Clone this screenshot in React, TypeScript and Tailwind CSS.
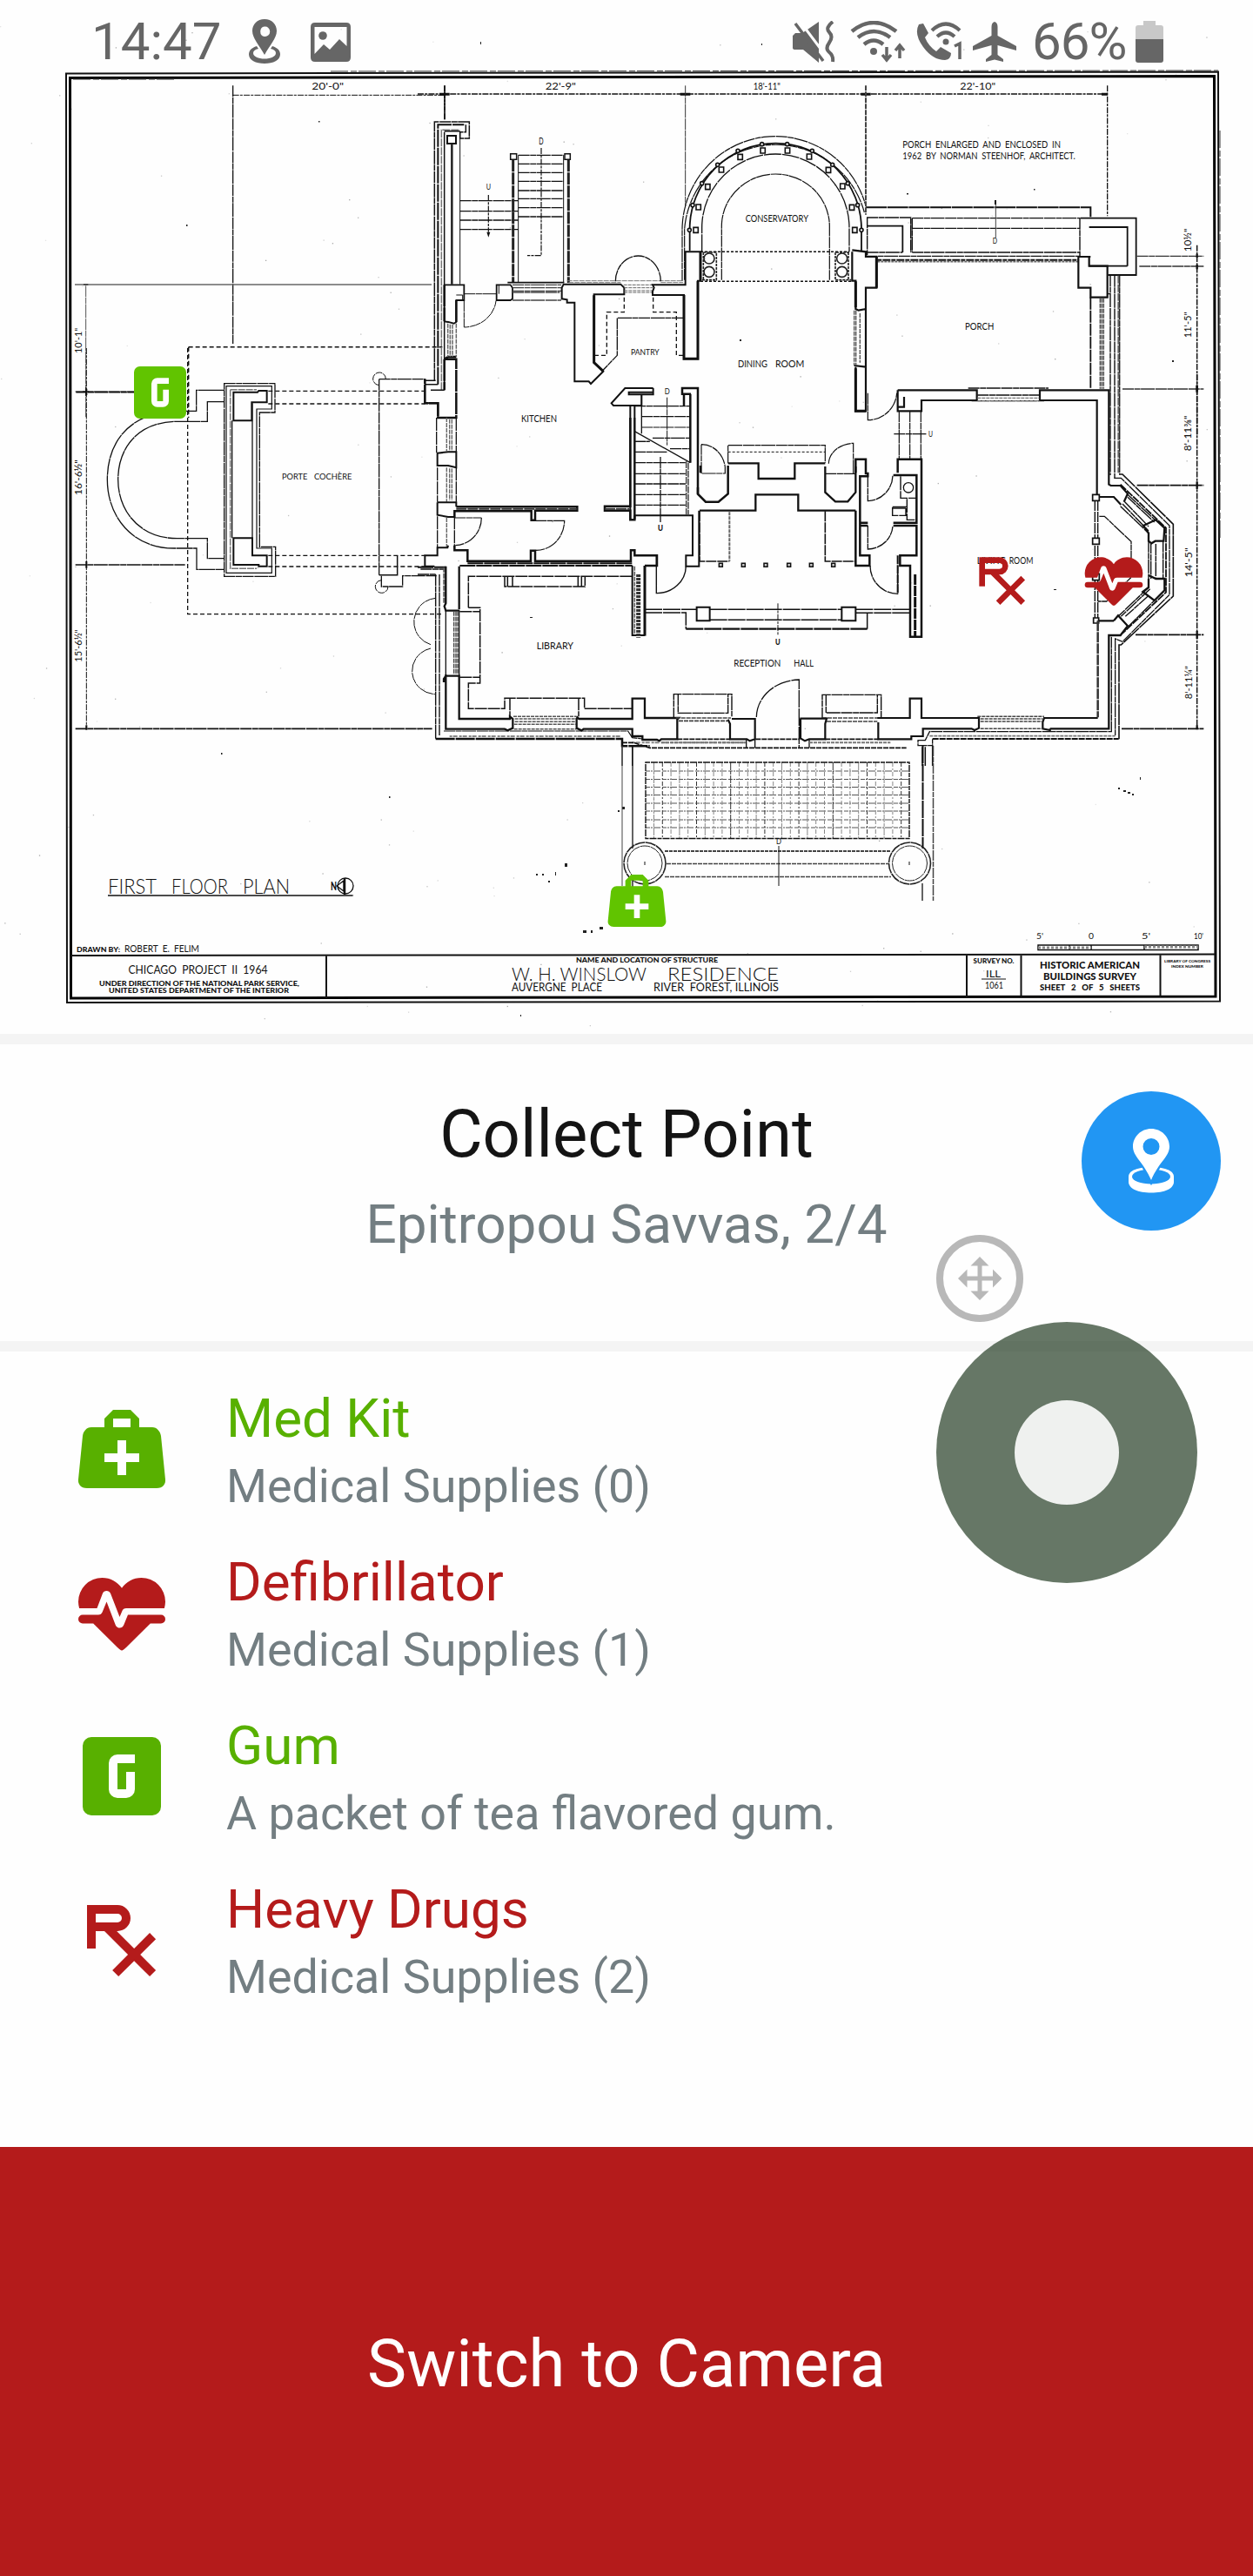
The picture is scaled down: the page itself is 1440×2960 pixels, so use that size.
import React from "react";

const ICONS = {
  bag: "M10,3L8,5V7H5C3.85,7 3.12,8 3,9L2,19C1.88,20 2.54,21 4,21H20C21.46,21 22.12,20 22,19L21,9C20.88,8 20.06,7 19,7H16V5L14,3H10M10,5H14V7H10V5M11,10H13V13H16V15H13V18H11V15H8V13H11V10Z",
  heart:
    "M7.5,4A5.5,5.5 0 0,0 2,9.5C2,10 2.09,10.5 2.22,11H6.3L7.57,7.63C7.87,6.83 9.05,6.75 9.43,7.63L11.5,13L12.09,11.58C12.22,11.25 12.57,11 13,11H21.78C21.91,10.5 22,10 22,9.5A5.5,5.5 0 0,0 16.5,4C14.64,4 13,4.93 12,6.34C11,4.93 9.36,4 7.5,4V4M3,12.5A1,1 0 0,0 2,13.5A1,1 0 0,0 3,14.5H5.44L11,20C12,20.9 12,20.9 13,20L18.56,14.5H21A1,1 0 0,0 22,13.5A1,1 0 0,0 21,12.5H13.4L12.47,14.8C12.07,15.81 10.92,15.67 10.55,14.83L8.5,9.5L7.54,11.83C7.39,12.21 7.05,12.5 6.6,12.5H3Z",
  gum: "M5,3H19A2,2 0 0,1 21,5V19A2,2 0 0,1 19,21H5A2,2 0 0,1 3,19V5A2,2 0 0,1 5,3M11,7A2,2 0 0,0 9,9V15A2,2 0 0,0 11,17H13A2,2 0 0,0 15,15V11H13V15H11V9H15V7H11Z",
  rx: "M4,4V10L4,14H6V10H8L13.41,15.41L9.83,19L11.24,20.41L14.83,16.83L18.41,20.41L19.82,19L16.24,15.41L19.82,11.83L18.41,10.41L14.83,14L10.83,10H11A3,3 0 0,0 14,7A3,3 0 0,0 11,4H4M6,6H11A1,1 0 0,1 12,7A1,1 0 0,1 11,8H6V6Z",
};
type IconName = keyof typeof ICONS;

function Icon({ name, className }: { name: IconName; className: string }) {
  return (
    <svg viewBox="0 0 24 24" fill="currentColor" className={className}>
      <path fillRule="evenodd" d={ICONS[name]} />
    </svg>
  );
}

/* ---------- floor plan ---------- */

const THIN = "13 0.6 7 0.5 16 0.8";
const DOT = "5 3";
const CHAIN = "7 1.2 3 1.2";

function Tile({ x, y, children }: { x: number; y: number; children: React.ReactNode }) {
  return (
    <g transform={`translate(${x} ${y}) scale(0.33333)`} className="[&_*]:[vector-effect:non-scaling-stroke]">
      {children}
    </g>
  );
}

function Ln({ d, w = 1, dash, c = "#111" }: { d: string; w?: number; dash?: string; c?: string }) {
  return <path d={d} fill="none" stroke={c} strokeWidth={w} strokeDasharray={dash} />;
}

type LblProps = { x: number; y: number; w: number; s: number; t: string; b?: boolean; l?: boolean; r?: boolean };

function Lbl({ x, y, w, s, t, b, l, r }: LblProps) {
  return (
    <text
      x={x}
      y={y}
      fontSize={s}
      textLength={w}
      lengthAdjust="spacingAndGlyphs"
      fontFamily="Lato, sans-serif"
      fontWeight={b ? 900 : l ? 300 : 400}
      fill="#111"
      transform={r ? `rotate(-90 ${x} ${y})` : undefined}
      xmlSpace="preserve"
    >
      {t}
    </text>
  );
}

const COLUMNS = [
  [959, 553, 937, 553], [968, 474, 948, 467], [1000, 404, 980, 392], [1047, 345, 1034, 328],
  [1112, 301, 1104, 280], [1190, 279, 1187, 257], [1275, 279, 1274, 257], [1350, 300, 1360, 280],
  [1416, 346, 1430, 328], [1465, 402, 1483, 392], [1497, 475, 1517, 467], [1507, 553, 1530, 553],
];

const SPECKS = Array.from({ length: 170 }, (_, i) => ({
  x: (i * 397.31 + i * i * 13.7) % 1438,
  y: 30 + ((i * 211.73 + i * i * 7.9) % 1150),
  o: 0.15 + ((i * 7) % 10) / 25,
}));

const DARK_SPECKS = [
  [552, 48, 1, 3], [875, 50, 1, 2], [254, 865, 1.5, 2], [447, 915, 1.5, 2], [649, 992, 3, 4], [616, 1004, 2, 2],
  [623, 1004, 2, 2], [630, 1012, 2, 2], [638, 1002, 1, 4], [670, 1069, 4, 3], [679, 1069, 2, 3], [689, 1065, 4, 3],
  [715, 927, 3, 3], [710, 931, 2, 2], [1285, 905, 2, 2], [1291, 908, 3, 2], [1296, 910, 3, 2], [1301, 912, 2, 2],
  [1310, 893, 1, 3], [366, 139, 1.5, 1.5], [214, 258, 1.5, 2], [850, 390, 2, 2], [1188, 217, 1.5, 1.5], [1042, 222, 2, 1.5],
  [1211, 677, 3, 1], [598, 1166, 1, 2], [609, 709, 3, 1], [1347, 414, 2, 2],
];

function FloorPlan() {
  return (
    <svg viewBox="0 0 1440 1188" className="block h-[1188px] w-[1440px]">
      <g fill="#555">
        {SPECKS.map((s, i) => (
          <rect key={i} x={s.x} y={s.y} width="1.3" height="1.3" opacity={s.o} />
        ))}
      </g>
      <g fill="#222">
        {DARK_SPECKS.map(([x, y, w, h], i) => (
          <rect key={i} x={x} y={y} width={w} height={h} />
        ))}
      </g>

      {/* sheet border */}
      <Ln w={2} d="M76,84.5L1400,82.5L1402,1150.5L77,1152Z" />
      <Ln w={3} c="#000" d="M80.5,89.5L1395.5,87.5L1397,1145L81.5,1147Z" />
      <Ln w={1} dash="20 3 7 2" c="#333" d="M380,82L1400,81M84,91L200,91M1402,150V620" />

      {/* upper left: dimension lines */}
      <Tile x={60} y={80}>
        <Ln dash={THIN} w={1.3} d="M623,55V945" />
        <Ln dash={CHAIN} d="M623,88H1353" />
        <Ln dash="7 1" d="M1353,55V175" w={1.5} />
        <Ln c="#666" w={1.3} d="M78,741H1308" />
        <Ln dash={THIN} c="#555" d="M116,745V1200" />
        <Ln dash={DOT} w={1.5} d="M470,956H1345M470,956V1200" />
        <Ln dash={THIN} d="M80,1110H282M105,1110H127M116,1095V1125M108,741H124" />
        <Lbl x={895} y={70} w={110} s={32} t={"20'-0\""} />
        <Lbl r x={102} y={978} w={88} s={32} t={"10'-1\""} />
      </Tile>

      {/* porte cochere */}
      <Tile x={60} y={400}>
        <Ln w={1.3} dash="30 0.5 19 0.5" d="M593,145H497V217H440C270,217 190,320 190,453C190,580 275,690 420,690H498V763H593M593,185H535V253H430C300,253 227,340 227,453C227,560 300,656 430,656H535V725H593" />
        <Ln dash={THIN} w={1.3} d="M593,122H768V222H715V685H770V787H593Z" />
        <Ln w={1.2} d="M600,131H757V210H705V690H757V775H600Z" />
        <Ln c="#777" dash="8 1" w={1.5} d="M614,143V760H705M614,143H705" />
        <Ln w={2} d="M625,152H708L712,147H740V187H688V250H625ZM625,655H690V715H740V752H712V747H625Z" />
        <Ln w={1.3} d="M620,250V655M690,190V655" />
        <Ln dash={DOT} w={1.3} d="M745,148H1285M745,192H1285M745,715H1285M745,753H1285M467,0V917H1350" />
        <Ln dash={THIN} w={1.3} d="M1127,107V782M1127,107H1285M1135,785V822H1208V785H1325" />
        <Ln w={1.5} d="M1127,782H1190V715M1285,107V190H1330" />
        <Ln w={2} d="M1285,190H1330V240H1393" />
        <Ln dash="8 1" d="M1127,128A22,22 0 1 1 1150,107M1135,800A22,22 0 1 0 1158,822" />
        <Lbl x={792} y={453} w={88} s={30} t="PORTE" />
        <Lbl x={903} y={453} w={130} s={30} t="COCHÈRE" />
        <Ln dash={THIN} d="M1322,862A82,82 0 0 0 1305,1022M1305,1035A82,80 0 0 0 1320,1193" />
        <Ln dash={THIN} w={1.6} d="M82,152H282M80,747H458M80,1312H1310" />
        <Ln dash={CHAIN} d="M118,0V1310" />
        <Ln w={2} d="M118,140V162M118,735V758M118,1300V1316" />
        <Lbl r x={102} y={507} w={122} s={32} t={"16'-6½\""} />
        <Lbl r x={102} y={1082} w={112} s={32} t={"15'-6½\""} />
      </Tile>

      {/* kitchen, pantry, conservatory */}
      <Tile x={480} y={80}>
        <Ln dash={THIN} w={1.5} d="M58,1072V180H178V237H146V215H166V190" />
        <Ln w={2} dash="20 1" d="M70,1085V190H160" />
        <Ln c="#777" w={1.5} dash="9 1" d="M82,1105V208H146" />
        <Ln w={1.5} d="M25,1072H62M25,1085H70M92,1105H45M92,215V1105M92,212H146" />
        <Ln w={2} d="M102,228H132V255H102Z" />
        <Ln w={2.5} c="#222" d="M118,255V740" />
        <Ln d="M146,215V740M347,295V735M503,295V735" />
        <Ln w={1.4} dash={THIN} d="M146,452H347M146,488H347M146,519H347M146,551H347M347,295H503M347,325H503M347,355H503M347,385H503M347,417H503M347,445H503M347,476H503M347,507H503" />
        <Ln dash={CHAIN} w={1.2} d="M244,432V560M426,270V641H378" />
        <path d="M238,560H250L244,578Z" fill="#111" />
        <Ln w={3} c="#222" dash="14 1" d="M329,310V735M520,310V735" />
        <Ln w={1.5} d="M320,290H341V310H320ZM507,290H526V310H507Z" />
        <Lbl x={418} y={259} w={16} s={32} t="D" />
        <Lbl x={236} y={415} w={16} s={28} t="U" />
        <Ln w={1.8} d="M92,742H160V795H133V870L125,875L105,870L92,868M272,742H320L327,752V790L320,795H272ZM310,734H505" />
        <Ln w={2.5} dash="25 1" d="M92,742V868M133,795V870M92,998H133V1200H70V1150H25V1066M92,998V1105M92,998L105,990H133" />
        <Ln c="#666" dash="5 1" w={1.5} d="M104,875V990M112,878V990M120,878V990M133,875V990" />
        <Ln dash={THIN} d="M160,773H270M160,795V888A112,100 0 0 0 270,797M133,777H155V795M280,742V773" />
        <Ln dash={THIN} c="#444" w={1.3} d="M327,742H495M327,752H495M327,763H495M327,768H490M327,795H495" />
        <Ln w={2} d="M503,740H700L712,752V775H608V1010L640,1040L597,1083L590,1075H541V803H515V793L497,790V752Z" />
        <Ln w={3} d="M608,778V1010L640,1040" />
        <Ln c="#777" dash="6 1" d="M515,728H915M520,734H700M838,734H915" />
        <Ln dash={THIN} d="M682,730A78,88 0 0 1 838,730" w={1.3} />
        <Ln c="#666" dash="4 1" d="M710,742H812M712,752H810M712,762H810M712,768H810" />
        <Ln w={2} d="M810,742H923V628H975V728H966V997H918V777H810V765L815,752Z" />
        <Ln w={3} d="M966,728V997H918V777M975,628V728" />
        <Ln dash={DOT} w={1.3} d="M712,785V836H652V985H610M812,785V836H892V985H918" />
        <Ln dash={THIN} w={1.3} d="M915,856H688V985L640,1035" />
        <Lbl x={735} y={985} w={98} s={31} t="PANTRY" />
        <Ln dash={CHAIN} w={1.4} d="M0,84H2380" />
        <path d="M75,80H110V89H75ZM905,80H940V89H905ZM1528,80H1562V89H1528ZM2358,80H2378V89H2358Z" fill="#111" />
        <Ln w={1.5} dash="9 1" d="M93,55V175" />
        <Ln dash={THIN} c="#333" d="M923,55V470" />
        <Lbl x={440} y={68} w={106} s={32} t={"22'-9\""} />
        <Lbl x={1157} y={68} w={93} s={32} t={"18'-11\""} />

        <Ln dash={THIN} w={1.2} d="M1048,725V540A186,180 0 0 1 1420,540V725" />
        <Ln w={1.3} dash="20 1" d="M980,628V545A254,254 0 0 1 1488,545V628" />
        <Ln w={1.8} d="M938,625V550A296,296 0 0 1 1530,550V625" />
        <Ln dash={THIN} w={1.2} d="M920,725V550A316,316 0 0 1 1540,492" />
        <Ln dash={THIN} w={1.2} d="M912,728V550A322,324 0 0 1 1545,470" />
        {COLUMNS.map(([sx, sy, cx, cy], i) => (
          <g key={i} fill="#fff" stroke="#111" strokeWidth="1.6">
            <rect x={sx - 8} y={sy - 9} width="16" height="18" />
            <circle cx={cx} cy={cy} r="6" />
          </g>
        ))}
        <g fill="none" stroke="#222" strokeWidth="1.6">
          <path d="M985,630H1030V725H980M1488,630H1440V725H1495M985,630V725M1485,630V725" strokeDasharray="3 1" />
          <circle cx="1005" cy="651" r="18" />
          <circle cx="1005" cy="697" r="18" />
          <circle cx="1463" cy="651" r="18" />
          <circle cx="1463" cy="697" r="18" />
        </g>
        <Ln dash="3 2" w={1.5} d="M975,628H1488M975,730H1500" />
        <Lbl x={1130} y={525} w={217} s={33} t="CONSERVATORY" />
        <Lbl x={1104} y={1025} w={102} s={34} t="DINING" />
        <Lbl x={1233} y={1025} w={100} s={34} t="ROOM" />
        <Lbl x={357} y={1215} w={123} s={35} t="KITCHEN" />

        <Ln w={2} d="M812,1098H715L668,1150L675,1158H733V1550M812,1098V1120H728V1112H812M748,1158V1550M772,1120V1158H733" />
        <Ln w={1.3} d="M772,1120V1255M748,1247L940,1355" />
        <Ln dash={THIN} w={1.2} d="M748,1160H938M772,1196H938M772,1233H938M810,1270H938M748,1282H800M870,1307H938" />
        <Ln dash={THIN} d="M860,1130V1295" />
        <Lbl x={851} y={1120} w={18} s={28} t="D" />
        <Ln w={2.5} d="M918,1160V1118H912V1098H966V1463M940,1118V1355M918,1118H942" />
      </Tile>

      {/* hall, library, stairs */}
      <Tile x={480} y={480}>
        <Ln w={1.3} dash="15 1" d="M65,0V120M68,172V290M68,340V448M133,0V120M133,172V290M127,340V448" />
        <Ln c="#666" dash="5 1" w={1.4} d="M100,0V115M110,5V115M118,5V115M100,172V290M110,175V285M118,175V285M100,345V445" />
        <Ln w={2} d="M68,122L105,118H133V172L105,165H68ZM68,292H133V307M68,292V335L105,342H127M105,440L103,448H68V475H25V512H58" />
        <Ln w={2.5} d="M133,307H550V320H405V353H392V322H127V345M127,440V457H172V494H390V458H405V494H735V457H748V475H825V510H783M733,0V305H645V320H733V352H748V337" />
        <Ln w={2} c="#333" dash="12 1" d="M133,314H550M645,314H730" />
        <Ln w={2} d="M748,0V350" />
        <Ln w={1.2} dash={THIN} d="M127,345H220M220,345A93,95 0 0 1 130,440M405,355H506A98,102 0 0 1 408,457" />
        <Ln w={2} dash="18 1" d="M0,515H97M145,510H740M172,502H740" />
        <Ln w={1.3} dash={THIN} d="M748,118H860M748,155H925M748,193H925M748,228H925M748,265H925M748,301H925M748,82H800M837,135V360" />
        <Ln w={2} d="M748,337H948V475H925V512H970V320" />
        <Ln w={1.5} c="#444" dash="8 1" d="M926,150V337M933,155V337" />
        <Lbl b x={828} y={389} w={18} s={27} t="U" />
        <Ln w={2.5} d="M966,240V263L993,290H1037L1070,262V165M975,165V190" />
        <Ln w={1.2} dash={THIN} d="M978,92A82,90 0 0 1 1060,170V192H978V92" />
        <Ln w={1.2} dash={THIN} d="M1070,157V95H1405V155" />
        <Ln dash="3 2" d="M1070,118H1405" />
        <Ln w={2.3} d="M1070,157H1175V210H1300V157H1405M972,320H1165V265H1312V320H1510" />
        <Ln w={1.6} dash="12 1" d="M972,322V495H1075M1405,322V495H1508" />
        <Ln w={2} c="#666" dash="4 1" d="M1075,325V495" />
        {[1045, 1123, 1200, 1280, 1357, 1433].map((x) => (
          <rect key={x} x={x - 6} y="502" width="12" height="12" fill="#ccc" stroke="#111" strokeWidth="1.5" />
        ))}
        <Ln w={1.4} d="M823,475V605A100,95 0 0 0 925,512" />
        <Ln w={1.5} dash="20 1" d="M783,661H963M783,672H925V728M1007,661H1463M1007,697H1463M1510,661H1698M1510,673H1698M1550,673V728" />
        <Ln w={2.2} dash="20 1" d="M925,728H1550" />
        <Ln w={2} d="M962,653H1007V700H962ZM1462,653H1510V700H1462Z" />
        <Ln dash={CHAIN} d="M1242,640V750" />
        <Lbl b x={1233} y={782} w={17} s={26} t="U" />
        <Lbl x={1090} y={857} w={162} s={35} t="RECEPTION" />
        <Lbl x={1297} y={857} w={68} s={35} t="HALL" />
        <Lbl x={410} y={797} w={127} s={36} t="LIBRARY" />
        <Ln w={2} d="M740,510V750H783" />
        <Ln w={3} d="M783,510V752" />
        <Ln w={5} c="#333" dash="3 1" d="M761,540V758" />
        <Ln w={1.5} c="#555" dash="5 1" d="M748,512V748" />
        <Ln w={1.5} dash="14 1" d="M175,655V547H740M300,547V582H577V547M327,547V582M310,547V582M553,547V582M565,547V582M175,655H215V915H175V1003H300V967H575V1003H740M145,668H215M145,895H215M318,967V1030M555,967V1030" />
        <Ln w={1.4} dash={THIN} d="M62,540V1107M75,540V1095M0,540H62M10,522H90" />
        <Ln w={1.5} c="#555" dash="6 1" d="M90,515V640M95,515V640" />
        <Ln w={2.3} d="M97,512V640L92,650L97,665H145M143,512V660M97,885V1073H300L310,1078L328,1070V1038L318,1030V1038H143V890H97L90,900V912" />
        <Ln w={1.3} d="M97,665V885M143,665V890" />
        <Ln w={1.4} c="#444" dash="5 1" d="M125,668V885M132,668V885M138,668V885" />
        <Ln w={1.5} c="#555" dash="4 1" d="M330,1030H548M335,1038H548M335,1048H545M332,1057H545M332,1073H548" />
        <Ln w={2.3} d="M548,1035V1070L565,1078L572,1073H740V1098H775V1110H825L833,1114L840,1108H895V1040L900,1035H783V968H740V1038H556L548,1030" />
        <Ln w={2.5} dash="22 1" d="M62,1107H705V1132H800" />
        <Ln w={1.2} dash={THIN} d="M90,1080H725L740,1103L775,1107" />
        <Ln w={2} c="#888" dash="3 1 5 2" d="M110,1098H700M740,1120H1130" />
        <Ln w={1.4} dash={THIN} d="M883,1037V953H1083V1030M898,953V1018H1070V953M1395,1037V955H1598V1035M1408,955V1017H1585V955" />
        <Ln w={1.6} c="#444" dash="5 1" d="M890,1035H1080M900,1045H1070M1395,1035H1590M1410,1047H1585" />
        <Ln w={2.2} d="M1083,1038H1163V1108L1145,1114L1135,1108H1077V1055L1070,1040M1318,1037H1410L1405,1055V1108H1350L1335,1114L1320,1105V1037" />
        <Ln w={1.3} dash="20 1" d="M1168,1032A150,130 0 0 1 1315,903V1140M1163,1108V1138M1133,1110V1138M1350,1110V1138" />
        <Ln w={1.6} dash="6 1" d="M895,1108H1077M1165,1108H1318M1405,1108H1588M705,1120H745L800,1138H1685" />
        <Ln w={2} c="#777" dash="4 1" d="M840,1120H1130M1350,1120H1630" />
        <Ln w={1.2} d="M705,1132V1200M740,1132V1200" />
      </Tile>

      {/* porch */}
      <Tile x={940} y={80}>
        <Ln w={2} dash="24 0.7" d="M165,475H940V508" />
        <Ln w={2} c="#444" dash="6 1" d="M165,55V500" />
        <Ln w={1.4} dash={THIN} d="M168,510H320V630M170,508V640M325,512V630M325,547H903M325,630H903M325,512H905M903,512V645" />
        <Ln w={1.8} d="M170,539H292V630M905,512H1097V708H1000M935,543H1067V677M935,677H1067" />
        <Ln w={1.3} dash={THIN} d="M170,630H292M165,643H903" />
        <Ln w={2} dash="5 1 9 1" d="M205,656H900" />
        <Ln w={1.5} c="#666" dash="3 1" d="M205,662H900" />
        <Ln d="M613,450V580" c="#444" />
        <Ln w={2} d="M612,450V465" />
        <Lbl x={602} y={600} w={16} s={26} t="D" />
        <Ln w={2.2} d="M118,628V728H130V825L140,830L165,825M118,622L165,628V645H202V752H165V1110M130,1025V1177H165V1110M125,1020L165,1025M940,645H898V752H940V785H998V677H935V645" />
        <Ln w={3} d="M130,730V820M130,1030V1177H165M202,645V752" />
        <Ln w={1.4} c="#555" dash="5 1" d="M125,830V1020M131,830V1020M145,840V1010" />
        <Ln w={1.8} dash="14 1" d="M940,785V1100" />
        <Ln w={1.4} c="#444" dash="5 1" d="M973,788V1100M979,788V1100M985,788V1100" />
        <Ln w={1.4} dash={THIN} d="M1008,708V1398M998,773H1008M1023,710V1410M1040,710V1395" />
        <Ln w={2} c="#666" dash="9 1" d="M1036,710V1390" />
        <Ln dash={CHAIN} w={1.3} d="M998,55V505" />
        <Lbl x={490} y={68} w={122} s={34} t={"22'-10\""} />
        <Lbl x={292} y={270} w={545} s={35} t="PORCH  ENLARGED  AND  ENCLOSED  IN" />
        <Lbl x={292} y={308} w={595} s={35} t="1962  BY  NORMAN  STEENHOF,  ARCHITECT." />
        <Lbl x={507} y={897} w={100} s={34} t="PORCH" />
        <Ln dash={THIN} c="#333" d="M1100,643H1330M1108,678H1330M1050,1101H1330" w={1.3} />
        <Ln dash={CHAIN} w={1.5} d="M1307,605V1260" />
        <Ln w={2.2} d="M1307,635V648M1307,672V688M1307,1088V1114" />
        <Lbl r x={1287} y={628} w={80} s={34} t={"10½\""} />
        <Lbl r x={1287} y={925} w={90} s={32} t={"11'-5\""} />
      </Tile>

      {/* living room and bay */}
      <Tile x={940} y={430}>
        <Ln w={2.2} d="M275,55H548V90H357V127H275V55M297,78V113H278M765,90V55H1003V380L1010,384H1043L1068,412L1055,440M765,90H962V423H1020L1045,450" />
        <Ln w={1.4} dash={THIN} d="M518,48H795M550,72H763M530,92H780" />
        <Ln w={1.4} c="#777" dash="4 1" d="M550,82H763M550,92H763" />
        <Ln w={1.2} dash={THIN} d="M172,65V158A100,100 0 0 0 272,65M280,127V292M317,127V292M355,127V292M262,206H375" />
        <Lbl x={381} y={217} w={15} s={28} t="U" />
        <Ln w={1.2} dash={THIN} d="M37,308A88,72 0 0 1 122,238V342M25,343H130" />
        <Ln w={2.3} d="M25,318V407L60,439H103L130,407V318" />
        <Ln w={2.5} d="M130,340V293H165V342H172V352H145V512H172M275,340V293H357V905H318V660H283V625H340V522H260M260,348H340V512H260M145,522H172M145,512V625H178V660H130V470" />
        <Ln w={1.4} dash="16 1" d="M285,352V427H340M307,430V502H340M257,457H303V487H257ZM257,462H303" />
        <circle cx="312" cy="391" r="17" fill="none" stroke="#111" strokeWidth="1.3" />
        <Ln w={1.3} dash={THIN} d="M172,352V437A88,90 0 0 0 258,350M172,522V603A88,85 0 0 0 258,525M180,660A95,97 0 0 0 275,757V660" />
        <Ln w={2} d="M275,625V757" dash="10 1" />
        <Ln w={3} dash="12 1" d="M335,690V905" />
        <Lbl x={548} y={654} w={100} s={35} t="LIVING" />
        <Lbl x={659} y={654} w={83} s={35} t="ROOM" />
        <Ln w={1.4} dash="12 1" d="M955,435V840M965,435V840" />
        <g fill="#fff" stroke="#111" strokeWidth="1.7">
          <rect x="947" y="415" width="23" height="21" />
          <rect x="947" y="565" width="23" height="21" />
          <rect x="947" y="688" width="23" height="22" />
          <rect x="950" y="840" width="18" height="18" />
        </g>
        <Ln w={1.3} dash={THIN} d="M970,490H988L1080,577V700L995,783H965" />
        <Ln w={1.6} dash="24 0.7" d="M1038,345H1050L1225,517V765L1045,933H1038V1258" />
        <Ln w={1.3} dash={THIN} d="M1022,358L1045,358L1212,522V760L1050,922L1025,912V1245" />
        <Ln w={1.8} dash="9 1" d="M1043,380L1200,530V752L1050,893" />
        <Ln w={1.4} dash={THIN} d="M1043,455L1140,548M1050,447L1140,540M1058,440L1140,525M1068,415L1165,505M1068,424L1160,510M1140,575V705M1148,580V705M1165,585V700M1190,575V705M1140,735L1035,835M1060,835L1138,765M1070,870L1160,780M1145,740L1045,835" />
        <Ln w={2.3} d="M1122,522L1165,502L1195,530L1192,575H1163L1150,583L1140,575V548ZM1140,693L1165,705H1195V745L1160,780L1120,750L1140,735V705M1020,850L1035,832L1068,868L1043,900H1003V1222H800M965,850H1020" />
        <Ln w={2.5} c="#333" dash="12 1" d="M965,850V1183" />
        <Ln w={2.2} d="M965,1185H780L775,1200V1222L800,1227V1222M205,1185H317V1118H357V1185H555V1220L540,1227L530,1222H362V1248H322V1258H208V1200" />
        <Ln w={1.5} c="#444" dash="4 1" d="M550,1180H780M560,1188H775M560,1197H775M560,1222H775" />
        <Ln w={1.3} dash={THIN} d="M1012,905V1232H385L370,1262H345V1280H395V1258" />
        <Ln w={1.6} c="#777" dash="4 1" d="M385,1247H1025" />
        <Ln w={2} dash="7 1" d="M395,1257H1037" />
        <Ln w={1.5} d="M395,1280V1350M360,1285V1350M370,1285V1350" />
        <Ln dash={THIN} w={1.6} d="M1100,383H1330M1095,898H1330M1047,1222H1330" />
        <Ln dash={CHAIN} w={1.5} d="M1307,0V1222" />
        <Ln w={2.2} d="M1307,38V60M1307,370V396M1307,885V912M1307,1210V1225" />
        <Lbl r x={1287} y={265} w={122} s={32} t={"8'-11⅜\""} />
        <Lbl r x={1290} y={700} w={102} s={32} t={"14'-5\""} />
        <Lbl r x={1290} y={1120} w={115} s={32} t={"8'-11¼\""} />
      </Tile>

      {/* front terrace */}
      <Ln c="#444" d="M715,857V1018" />
      <Ln c="#444" dash="12 1 6 1" w={1.5} d="M1072.5,857V1035" />
      <Ln w={1.3} d="M727,857V975M727,1010V1036M1060,1015V1035" />
      <Ln w={2} dash="20 1" d="M1060.5,857V975" />
      <Ln c="#555" dash="5 1 2 1 8 2" d="M742,886H1045M742,895.5H1045M742,904.5H1045M742,913.5H1045M742,923H1045M742,932H1045M742,942H1045M742,951H1045" />
      {Array.from({ length: 30 }, (_, i) => 751.5 + i * 9.8).map((x, i) => (
        <Ln key={x} c={i % 4 === 1 ? "#333" : "#888"} dash={i % 3 ? "5 2 2 2" : "9 1 4 1"} d={`M${x},876V963`} />
      ))}
      <Ln w={1.4} dash="5 1 8 1" d="M742,876H1045V963.5H742Z" />
      <g fill="none" stroke="#222" strokeDasharray="12 0.6">
        <circle cx="741" cy="992" r="24" strokeWidth="1.6" />
        <circle cx="741" cy="992" r="20" />
        <circle cx="1045.5" cy="992" r="24" strokeWidth="1.6" />
        <circle cx="1045.5" cy="992" r="20" />
      </g>
      <Ln w={2} c="#444" dash="4 1" d="M764,978H1024" />
      <Ln w={1.4} dash="5 1" c="#444" d="M766,992.5H1021M764,1007.5H1024" />
      <Ln d="M895,972V1018M741,990V994M1045,990V994" />
      <Lbl x={892} y={970} w={6} s={9} t="D" />

      {/* title block */}
      <Lbl l x={124} y={1027} w={56} s={22.5} t="FIRST" />
      <Lbl l x={197} y={1027} w={65} s={22.5} t="FLOOR" />
      <Lbl l x={279} y={1027} w={54} s={22.5} t="PLAN" />
      <Lbl b x={380} y={1023} w={7} s={13} t="N" />
      <Ln w={1.3} d="M124,1029H405.5M387,1018L395,1012V1024Z" />
      <circle cx="397" cy="1018" r="9" fill="none" stroke="#111" strokeWidth="1.3" />
      <Ln w={2.5} d="M396,1009V1028" />
      <Lbl b x={88} y={1094} w={50} s={8} t="DRAWN BY:" />
      <Lbl x={143} y={1093.5} w={86} s={11} t="ROBERT  E.  FELIM" />
      <Ln w={2} d="M81,1098L620,1097.5L1397,1096.5M375,1098V1147M1111,1097V1146M1173.5,1097V1146M1333.5,1097V1146" />
      <Lbl x={147.5} y={1118.5} w={160} s={13} t="CHICAGO  PROJECT  II  1964" />
      <Lbl b x={114} y={1133} w={230} s={7.5} t="UNDER DIRECTION OF THE NATIONAL PARK SERVICE," />
      <Lbl b x={125} y={1140.5} w={207} s={7.5} t="UNITED STATES DEPARTMENT OF THE INTERIOR" />
      <Lbl b x={662} y={1106} w={163} s={7} t="NAME AND LOCATION OF STRUCTURE" />
      <Lbl l x={588} y={1126.5} w={155} s={22} t="W. H. WINSLOW" />
      <Lbl l x={767} y={1126.5} w={128} s={22} t="RESIDENCE" />
      <Lbl x={588} y={1139} w={104} s={12.5} t="AUVERGNE  PLACE" />
      <Lbl x={751} y={1139} w={144} s={12.5} t="RIVER  FOREST, ILLINOIS" />
      <Lbl b x={1118.5} y={1107} w={47} s={8} t="SURVEY NO." />
      <Lbl x={1133} y={1122.5} w={17} s={11} t="ILL" />
      <Ln d="M1128,1125H1156" />
      <Lbl x={1132} y={1136} w={21} s={11} t="1061" />
      <Lbl b x={1195} y={1113} w={115} s={11} t="HISTORIC AMERICAN" />
      <Lbl b x={1199} y={1126} w={107} s={11} t="BUILDINGS SURVEY" />
      <Lbl b x={1195} y={1137.5} w={115} s={9} t="SHEET   2   OF   5   SHEETS" />
      <Lbl b x={1338} y={1105.5} w={53} s={4.5} t="LIBRARY OF CONGRESS" />
      <Lbl b x={1346} y={1112} w={37} s={4.5} t="INDEX NUMBER" />
      <Lbl x={1191} y={1079} w={8} s={10} t="5'" />
      <Lbl x={1251} y={1079} w={6} s={10} t="0" />
      <Lbl x={1312} y={1079} w={10} s={10} t="5'" />
      <Lbl x={1372} y={1079} w={11} s={10} t="10'" />
      <Ln w={1.5} d="M1193,1086H1377V1091.5H1193ZM1229,1086V1091M1254,1086V1091M1315,1086V1091" />
      <Ln w={3} c="#888" dash="3 2" d="M1193,1089H1254M1315,1088H1377" />
    </svg>
  );
}

/* ---------- status bar ---------- */

function StatusBar() {
  return (
    <div className="absolute inset-x-0 top-0 flex h-24 items-center justify-between pl-[105px] pr-[103px] text-[#666666]">
      <div className="flex items-center">
        <span className="w-[181px] text-[60px] leading-none">14:47</span>
        <svg viewBox="0 0 36 51" className="mt-[-2px] h-[51px] w-9" fill="currentColor">
          <path
            fillRule="evenodd"
            d="M18 0C9.500 0 4 6 4 13.500C4 22 12 30 18 41C24 30 32 22 32 13.500C32 6 26.500 0 18 0ZM18 8.500A5.500 5.800 0 1 1 18 20A5.500 5.800 0 0 1 18 8.500Z"
          />
          <path d="M9 31C3 33 0 36 0 40.500C0 47 8 51 18 51S36 47 36 40.500C36 36 33 33 27 31L25 34C29 35 31 36.500 31 39C31 43 25 45.500 18 45.500S5 43 5 39C5 36.500 7 35 11 34Z" />
        </svg>
        <svg viewBox="0 0 46 45" className="ml-[35px] h-[45px] w-[46px]" fill="currentColor">
          <path
            fillRule="evenodd"
            d="M5 0H41Q46 0 46 5V40Q46 45 41 45H5Q0 45 0 40V5Q0 0 5 0ZM4.500 5V36L15 25L22 31L33 19L41.500 27V5Z"
          />
          <circle cx="14" cy="15" r="4.800" />
        </svg>
      </div>
      <div className="flex items-center">
        <svg viewBox="0 0 49 48" className="h-12 w-[49px]" fill="currentColor">
          <path d="M0 17L3 14H11L30 1V48L12 33H3Q0 33 0 31Z" />
          <path d="M8 0L38 40" stroke="#fff" strokeWidth="3" />
          <path d="M3 3L35 46" stroke="currentColor" strokeWidth="3.500" />
          <path d="M46 1Q37 8 42 13T42 25T42 36T46 47" fill="none" stroke="currentColor" strokeWidth="4" />
        </svg>
        <svg viewBox="0 0 64 48" className="ml-[17px] h-12 w-16" fill="none" stroke="currentColor" strokeWidth="4.500">
          <path d="M2 12Q27 -8 53 12M9 19Q27 5 46 19M16 27Q27 18 38 27" />
          <circle cx="27" cy="35" r="4" fill="currentColor" stroke="none" />
          <path d="M42 30V45M37 39L42 45L47 39M57 43V29M52 34L57 28L62 34" strokeWidth="3.500" />
        </svg>
        <svg viewBox="0 0 56 46" className="ml-[11px] h-[46px] w-14" fill="none" stroke="currentColor" strokeWidth="4.200">
          <path
            d="M4 3L9 2L15 13L11 18Q15 28 24 34L29 29L41 36Q41 43 34 44Q20 44 9 29T4 3Z"
            fill="currentColor"
            stroke="none"
          />
          <path d="M19 10Q35 -5 51 10M25 17Q35 8 45 17" />
          <circle cx="35" cy="23" r="3.500" fill="currentColor" stroke="none" />
          <path d="M45 28L51 25V43" strokeWidth="3.500" />
        </svg>
        <svg viewBox="0 0 50 46" className="ml-[10px] h-[46px] w-[50px]" fill="currentColor">
          <path d="M25 0Q28.500 1 28.500 6V16L50 28V33L28.500 27V38L35 43V46L25 43.500L15 46V43L21.500 38V27L0 33V28L21.500 16V6Q21.500 1 25 0Z" />
        </svg>
        <span className="ml-[18px] w-[119px] text-[60px] leading-none tracking-[-1px]">66%</span>
        <svg viewBox="0 0 32 48" className="h-12 w-8">
          <path d="M9 0H23V5H29Q32 5 32 8V21H0V8Q0 5 3 5H9Z" fill="#c8c8c8" />
          <path d="M0 21H32V45Q32 48 29 48H3Q0 48 0 45Z" fill="#666666" />
        </svg>
      </div>
    </div>
  );
}

/* ---------- list ---------- */

const ITEMS: { icon: IconName; name: string; detail: string; tone: string }[] = [
  { icon: "bag", name: "Med Kit", detail: "Medical Supplies (0)", tone: "text-[#58b000]" },
  { icon: "heart", name: "Defibrillator", detail: "Medical Supplies (1)", tone: "text-[#b41b1b]" },
  { icon: "gum", name: "Gum", detail: "A packet of tea flavored gum.", tone: "text-[#58b000]" },
  { icon: "rx", name: "Heavy Drugs", detail: "Medical Supplies (2)", tone: "text-[#b41b1b]" },
];

export default function App() {
  return (
    <div className="relative flex h-[2960px] w-[1440px] flex-col overflow-hidden bg-[#fefefe] font-['Roboto',sans-serif]">
      <section className="relative h-[1188px] shrink-0">
        <FloorPlan />
        <StatusBar />
        <Icon name="gum" className="absolute left-36 top-[411px] size-20 text-[#61c400]" />
        <Icon name="bag" className="absolute left-[692px] top-[995px] size-20 text-[#61c400]" />
        <Icon name="rx" className="absolute left-[1112px] top-[627px] size-20 text-[#b41b1b]" />
        <Icon name="heart" className="absolute left-[1240px] top-[627px] size-20 text-[#b41b1b]" />
      </section>

      <div className="h-3 shrink-0 bg-[#f4f4f4]" />

      <header className="flex h-[341px] shrink-0 flex-col items-center pt-[53px]">
        <h1 className="text-[76px] leading-[100px] text-[#141414]">Collect Point</h1>
        <p className="mt-[14px] text-[62px] leading-[80px] text-[#737e82]">Epitropou Savvas, 2/4</p>
      </header>

      <div className="h-3 shrink-0 bg-[#f4f4f4]" />

      <ul className="flex h-[914px] shrink-0 flex-col pl-20 pt-[33px]">
        {ITEMS.map((item) => (
          <li key={item.name} className={`flex h-[188px] ${item.tone}`}>
            <Icon name={item.icon} className="mt-[19px] size-[120px]" />
            <div className="ml-[60px]">
              <p className="text-[62px] leading-[88px]">{item.name}</p>
              <p className="text-[53.8px] leading-[68px] text-[#737e82]">{item.detail}</p>
            </div>
          </li>
        ))}
      </ul>

      <button className="flex-1 bg-[#b41b1b] pt-1 text-[76px] text-white">Switch to Camera</button>

      {/* floating controls */}
      <div className="absolute left-[1243px] top-[1254px] flex size-40 items-center justify-center rounded-full bg-[#2196f3]">
        <svg viewBox="0 0 52 74" className="h-[74px] w-[52px]" fill="#fff">
          <path d="M0 55C0 48 11 44 26 44S52 48 52 55V61C52 69 41 73.500 26 73.500S0 69 0 61Z" />
          <ellipse cx="26" cy="55" rx="22" ry="8.500" fill="#2196f3" />
          <path d="M15 40L26 62L37 40Z" fill="#2196f3" stroke="#2196f3" strokeWidth="3" />
          <path
            fillRule="evenodd"
            d="M26 0C14.500 0 5 9 5 20.500C5 32 17 38 26 59C35 38 47 32 47 20.500C47 9 37.500 0 26 0ZM26 11A9.500 9.500 0 1 1 26 30A9.500 9.500 0 0 1 26 11Z"
          />
        </svg>
      </div>
      <div className="absolute left-[1076px] top-[1419px] flex size-[100px] items-center justify-center rounded-full border-8 border-[#b8b8b8]">
        <svg viewBox="0 0 50 50" className="size-[50px]" fill="#b8b8b8">
          <path d="M25 0L35.500 10.500H27.500V22.500H40V14.500L50.500 25L40 35.500V27.500H27.500V39.500H35.500L25 50L14.500 39.500H22.500V27.500H10.500V35.500L0 25L10.500 14.500V22.500H22.500V10.500H14.500Z" />
        </svg>
      </div>
      <div className="absolute left-[1076px] top-[1519px] flex size-[300px] items-center justify-center rounded-full bg-[#001c00]/60">
        <div className="size-[120px] rounded-full bg-[#eff1ef]" />
      </div>
    </div>
  );
}
